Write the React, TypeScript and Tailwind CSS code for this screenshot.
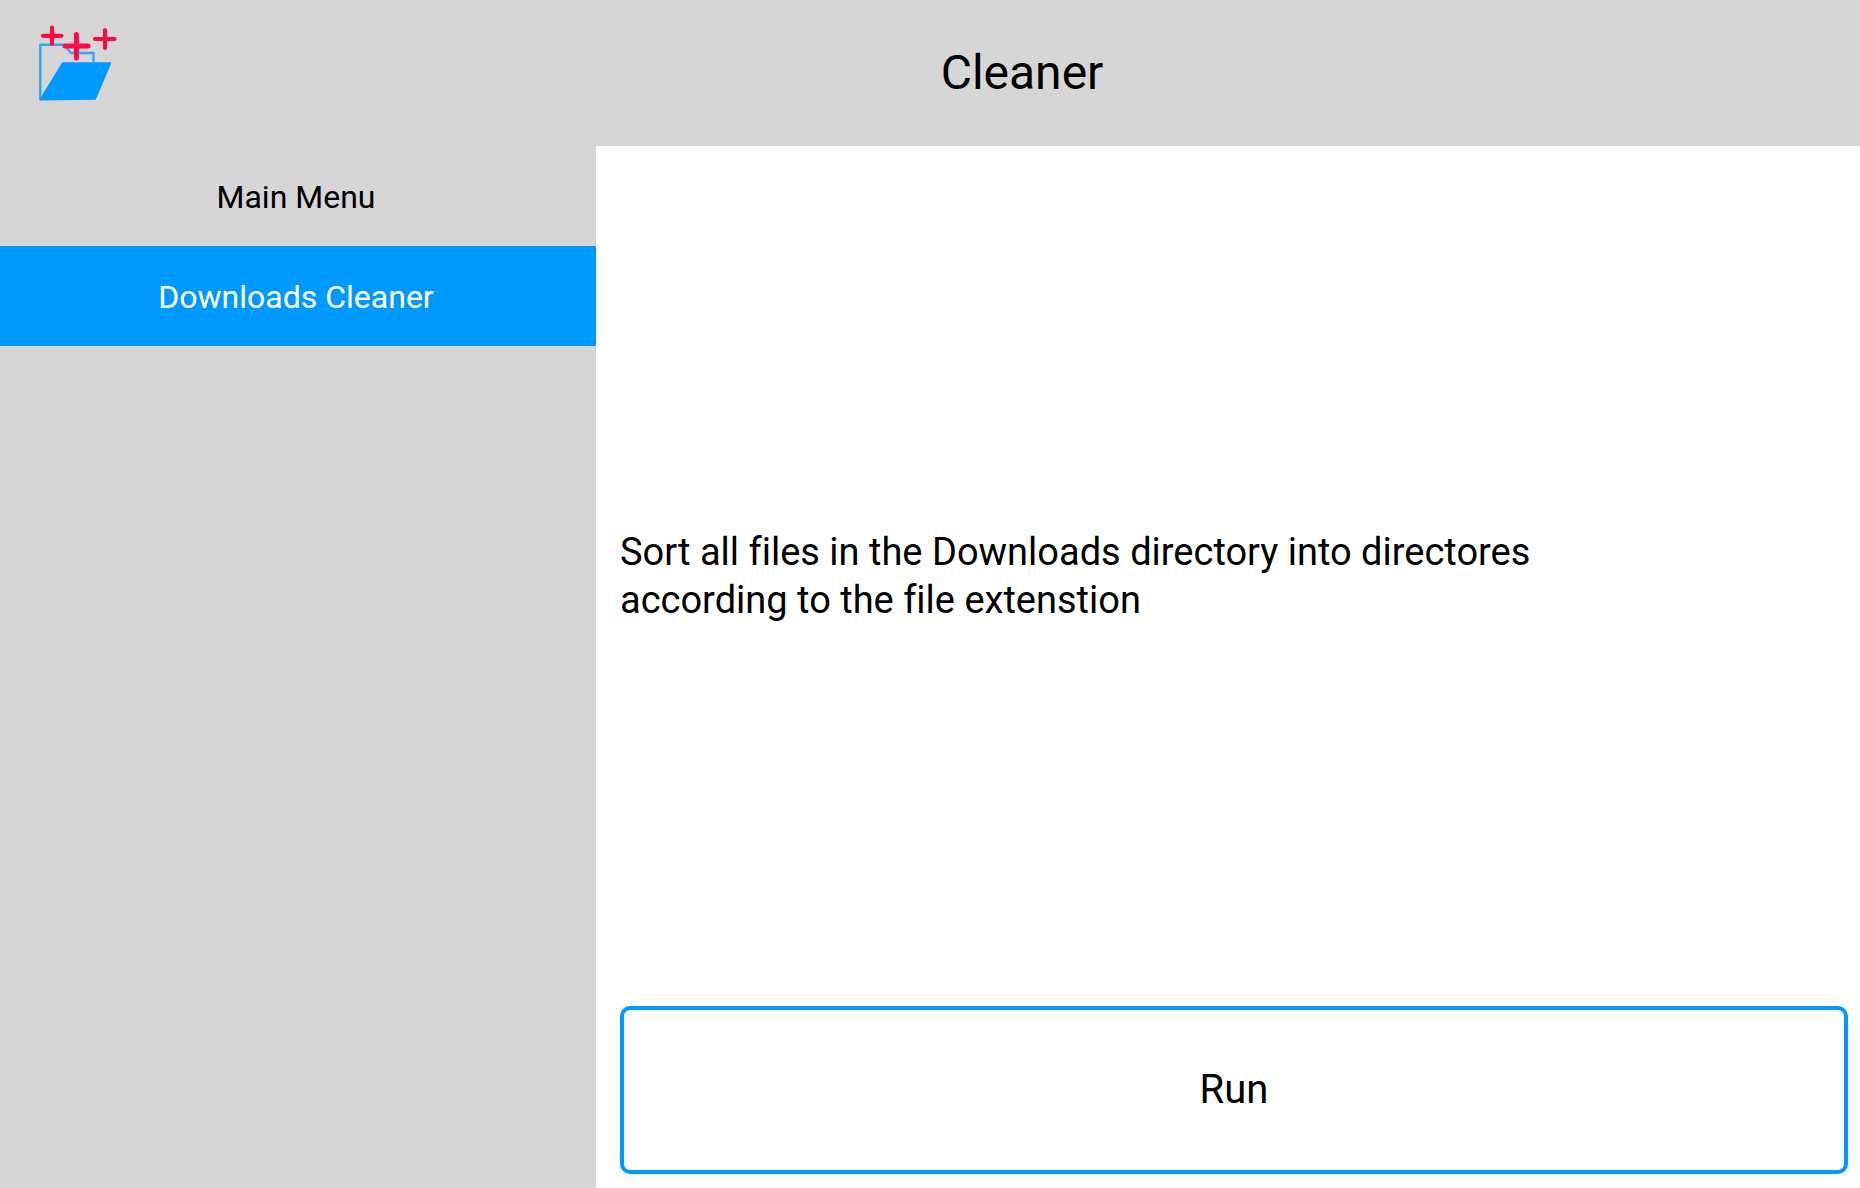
function Logo() {
  return (
    <svg
      viewBox="0 0 80 80"
      className="size-20 overflow-visible"
      role="img"
      aria-label="Cleaner logo"
      fill="none"
      strokeLinecap="round"
      strokeLinejoin="round"
    >
      <path d="M4.300 66V11.700H28L35 20H57.500V28" stroke="#35a4f3" strokeWidth="2.400" />
      <path d="M26.800 30H74.500L59.200 66L4.300 66.600Z" fill="#0099ff" stroke="#0099ff" strokeWidth="1.600" />
      <g stroke="#ff0a46" strokeWidth="4.200">
        <path d="M7 2.800H25.500M16 -5.500V11" />
        <path d="M59 6H78.500M69 -3V15" />
      </g>
      <path d="M29 13H52M40.400 1.500V25" stroke="#ff0a46" strokeWidth="5" />
    </svg>
  );
}

const items = [
  { label: "Main Menu", active: false },
  { label: "Downloads Cleaner", active: true },
];

export default function App() {
  return (
    <div className="flex min-h-screen flex-col bg-[#d6d6d6] font-['Roboto',sans-serif] text-black [font-variant-ligatures:none]">
      <header className="flex h-[146px] items-center">
        <div className="w-[184px] pl-9">
          <Logo />
        </div>
        <h1 className="flex-1 text-center text-5xl">Cleaner</h1>
      </header>
      <div className="flex flex-1">
        <nav className="w-[596px] shrink-0" aria-label="Sections">
          {items.map((item) => (
            <button
              key={item.label}
              type="button"
              aria-current={item.active ? "page" : undefined}
              className={
                item.active
                  ? "block h-[100px] w-full bg-[#0099ff] pt-0.5 pr-1 text-[32px] text-white"
                  : "block h-[100px] w-full pt-0.5 pr-1 text-[32px]"
              }
            >
              {item.label}
            </button>
          ))}
        </nav>
        <main className="flex flex-1 flex-col bg-white pr-3 pb-3.5 pl-6">
          <div className="flex flex-1 items-center">
            <p className="max-w-[1000px] text-[38px] leading-12">
              Sort all files in the Downloads directory into directores according to the file extenstion
            </p>
          </div>
          <button type="button" className="h-[168px] rounded-[10px] border-4 border-[#0099ff] text-[40px]">
            Run
          </button>
        </main>
      </div>
    </div>
  );
}
